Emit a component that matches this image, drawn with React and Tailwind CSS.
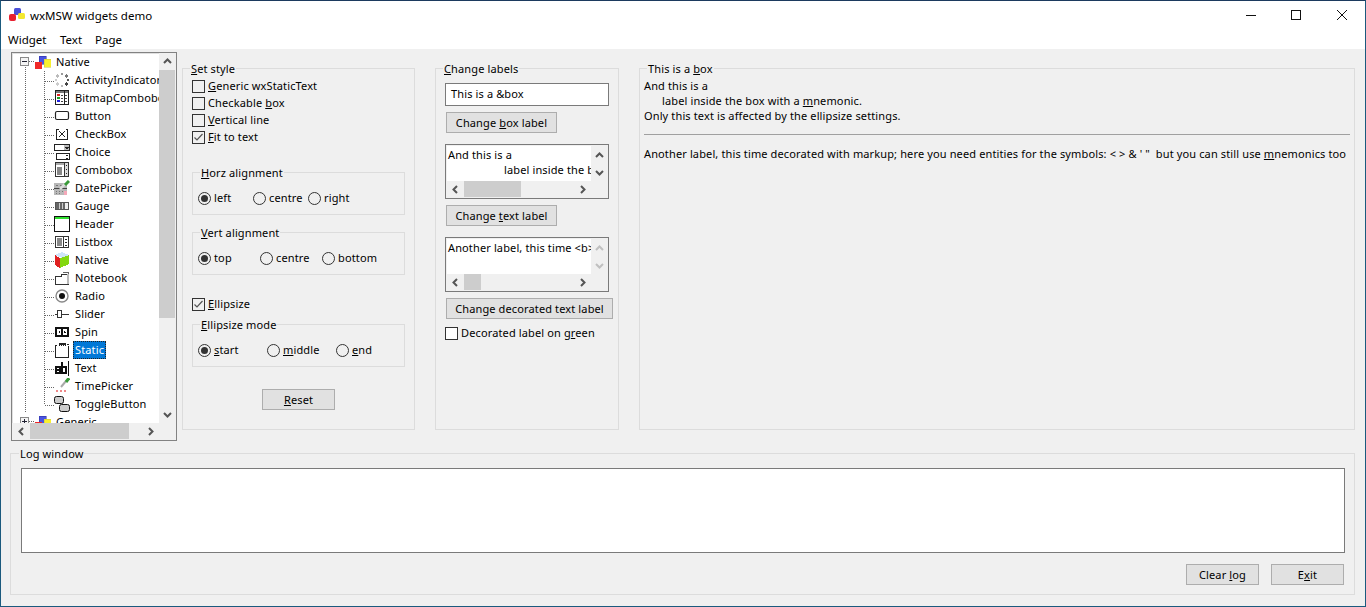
const Group = ({ title, className = "", bodyClassName = "", legendClassName = "ml-[7px]", children }) => (
  <fieldset className={`border border-[#dcdcdc] min-w-0 ${className}`}>
    <legend className={`px-px pt-[2px] leading-[16px] h-[18px] ${legendClassName}`}>{title}</legend>
    <div className={bodyClassName}>{children}</div>
  </fieldset>
);

const Button = ({ className = "", children }) => (
  <div className={`h-[21px] flex items-center justify-center bg-[#e1e1e1] border border-[#adadad] leading-none ${className}`}>
    {children}
  </div>
);

const Checkbox = ({ checked, white, children, className = "" }) => (
  <div className={`flex items-center h-[17px] ${className}`}>
    <div className={`w-[13px] h-[13px] border border-[#333] mr-[3px] shrink-0 ${white ? "bg-white" : "bg-[#f0f0f0]"}`}>
      {checked && (
        <svg width="11" height="11" viewBox="0 0 11 11" fill="none">
          <path d="M1.5 5.5 L4 8 L9.5 2" stroke="#555" strokeWidth="1.2" />
        </svg>
      )}
    </div>
    <span>{children}</span>
  </div>
);

const Radio = ({ checked, children, className = "" }) => (
  <div className={`flex items-center ${className}`}>
    <div className="w-[13px] h-[13px] rounded-full border border-[#333] mr-[3px] shrink-0 flex items-center justify-center">
      {checked && <div className="w-[7px] h-[7px] rounded-full bg-[#333]" />}
    </div>
    <span>{children}</span>
  </div>
);

const Chevron = ({ dir, disabled }) => {
  const paths = {
    up: "M1 6 L4.5 2.5 L8 6",
    down: "M1 3 L4.5 6.5 L8 3",
    left: "M6 1 L2.5 4.5 L6 8",
    right: "M3 1 L6.5 4.5 L3 8",
  };
  return (
    <svg width="9" height="9" viewBox="0 0 9 9" fill="none">
      <path d={paths[dir]} stroke={disabled ? "#c0c0c0" : "#555"} strokeWidth="2" />
    </svg>
  );
};

const ArrowCell = ({ dir }) => (
  <div className="w-[17px] h-[16px] shrink-0 flex items-center justify-center">
    <Chevron dir={dir} />
  </div>
);

const VArrowCell = ({ dir }) => (
  <div className="w-full h-[17px] shrink-0 flex items-center justify-center">
    <Chevron dir={dir} />
  </div>
);

const HScroll = ({ thumb }) => (
  <div className="h-[16px] flex items-center bg-[#f0f0f0] shrink-0">
    <ArrowCell dir="left" />
    <div className="flex-1 h-full">
      <div className="h-full bg-[#cdcdcd]" style={{ width: thumb }} />
    </div>
    <ArrowCell dir="right" />
  </div>
);

const TextBox = ({ thumb, disabled, children }) => (
  <div className="w-[164px] h-[55px] border border-[#7a7a7a] p-px flex flex-col bg-[#f0f0f0]">
    <div className="flex flex-1 min-h-0">
      <div className="flex-1 bg-white overflow-hidden whitespace-nowrap pl-[1px] pt-[1px] leading-[15px]">{children}</div>
      <div className="w-[16px] flex flex-col items-center pt-px">
        <div className="h-[17px] flex items-center"><Chevron dir="up" disabled={disabled} /></div>
        <div className="h-[17px] flex items-center"><Chevron dir="down" disabled={disabled} /></div>
      </div>
    </div>
    <div className="w-[144px]">
      <HScroll thumb={thumb} />
    </div>
  </div>
);

/* tree icons */
const Ico = ({ children }) => (
  <svg width="16" height="16" viewBox="0 0 16 16" fill="none" shapeRendering="crispEdges" className="shrink-0">
    {children}
  </svg>
);

const WxIcon = () => (
  <Ico>
    <rect x="4" y="2" width="7" height="8" fill="#4a55e0" stroke="#2a2a9a" strokeWidth="0.5" />
    <rect x="0" y="8" width="7" height="7" fill="#f02828" />
    <rect x="9" y="5" width="7" height="8" fill="#f8f030" stroke="#c8c040" strokeWidth="0.5" />
  </Ico>
);

const icons = {
  ActivityIndicator: (
    <Ico>
      <circle cx="8" cy="2" r="1.6" fill="#999" />
      <circle cx="12.5" cy="4" r="1.6" fill="#777" />
      <circle cx="14" cy="8" r="1.6" fill="#555" />
      <circle cx="12.5" cy="12" r="1.6" fill="#444" />
      <circle cx="8" cy="14" r="1.6" fill="#bbb" />
      <circle cx="3.5" cy="12" r="1.6" fill="#ccc" />
      <circle cx="2" cy="8" r="1.6" fill="#ccc" />
      <circle cx="3.5" cy="4" r="1.6" fill="#bbb" />
    </Ico>
  ),
  BitmapCombobox: (
    <Ico>
      <rect x="1.5" y="0.5" width="13" height="14" stroke="#222" fill="#fff" />
      <rect x="2" y="1" width="12" height="2" fill="#777" />
      <rect x="3" y="4" width="3" height="2" fill="#e02020" />
      <rect x="3" y="7" width="3" height="2" fill="#20a020" />
      <rect x="3" y="10" width="3" height="2" fill="#2020e0" />
      <path d="M7 5h2M7 8h2M7 11h2M11 5h2M11 8h2M11 11h2" stroke="#444" />
      <path d="M10.5 1v13" stroke="#222" />
    </Ico>
  ),
  Button: (
    <Ico>
      <rect x="1.5" y="3.5" width="13" height="8" rx="1.5" stroke="#222" strokeWidth="1.2" fill="#fff" shapeRendering="auto" />
    </Ico>
  ),
  CheckBox: (
    <Ico>
      <path d="M5 3.5h-2.5v10h11v-10h-2" stroke="#222" />
      <path d="M5 5l6 6M11 5l-6 6" stroke="#222" shapeRendering="auto" />
    </Ico>
  ),
  Choice: (
    <Ico>
      <rect x="0.5" y="0.5" width="15" height="6" stroke="#222" fill="#bbb" />
      <rect x="1" y="1" width="9" height="5" fill="#fff" />
      <path d="M11 3h4M12 4h2" stroke="#222" />
      <rect x="2.5" y="9.5" width="13" height="6" stroke="#222" fill="#fff" />
      <path d="M12 11h2M12 14h2" stroke="#222" />
    </Ico>
  ),
  Combobox: (
    <Ico>
      <rect x="1.5" y="0.5" width="13" height="14" stroke="#333" fill="#fff" />
      <rect x="2" y="1" width="8" height="2" fill="#aaa" />
      <rect x="3" y="5" width="5" height="8" fill="#888" />
      <rect x="11" y="1" width="3" height="13" fill="#ddd" />
      <path d="M10.5 1v13" stroke="#333" />
      <path d="M12 3h1M12 7h1M12 11h1" stroke="#222" />
    </Ico>
  ),
  DatePicker: (
    <Ico>
      <rect x="0" y="3" width="13" height="12" fill="#b8b8b8" />
      <path d="M0 8.5h13" stroke="#444" />
      <path d="M2 5h2M6 5h2M2 11h1M5 11h1M8 11h1M2 13h1M5 13h1" stroke="#777" />
      <rect x="10" y="11" width="3" height="4" fill="#f4a8b8" />
      <path d="M6 9L11 4" stroke="#ddd" strokeWidth="2.5" shapeRendering="auto" />
      <path d="M11 5L15 1" stroke="#3a9a3a" strokeWidth="3" shapeRendering="auto" />
    </Ico>
  ),
  Gauge: (
    <Ico>
      <rect x="1.5" y="4.5" width="13" height="7" stroke="#555" fill="#eee" />
      <rect x="2" y="5" width="9" height="6" fill="#666" />
      <path d="M5 5v6M8 5v6" stroke="#ccc" />
    </Ico>
  ),
  Header: (
    <Ico>
      <rect x="0.5" y="0.5" width="15" height="15" stroke="#111" fill="#fff" />
      <rect x="1" y="1" width="14" height="2" fill="#30e030" />
    </Ico>
  ),
  Listbox: (
    <Ico>
      <rect x="1.5" y="2.5" width="13" height="11" stroke="#333" fill="#fff" />
      <rect x="3" y="4" width="5" height="8" fill="#888" />
      <path d="M9.5 3v10" stroke="#333" />
      <path d="M11 5h2M11 8h2M11 11h2" stroke="#222" />
    </Ico>
  ),
  Native: (
    <Ico>
      <path d="M1 3L8 0L15 3L8 6z" fill="#cfe4f8" />
      <path d="M1 3L6 6V16L1 13z" fill="#e02020" />
      <path d="M6 6L15 3V12L6 16z" fill="#84d810" />
    </Ico>
  ),
  Notebook: (
    <Ico>
      <path d="M1.5 6.5h6v-2h7v10h-13z" stroke="#333" fill="#fff" />
      <path d="M8.5 2.5h6v3" stroke="#666" />
      <rect x="13" y="4" width="2" height="10" fill="#bbb" />
    </Ico>
  ),
  Radio: (
    <Ico>
      <circle cx="8" cy="8" r="6" stroke="#888" strokeWidth="1.4" fill="#fff" shapeRendering="auto" />
      <circle cx="8" cy="8" r="3" fill="#111" shapeRendering="auto" />
    </Ico>
  ),
  Slider: (
    <Ico>
      <rect x="3.5" y="4.5" width="4" height="7" stroke="#333" fill="#fff" />
      <path d="M8 8h7" stroke="#333" />
      <path d="M1 8h2" stroke="#333" />
    </Ico>
  ),
  Spin: (
    <Ico>
      <rect x="1" y="3" width="14" height="10" fill="#111" />
      <rect x="3" y="5" width="4" height="6" fill="#fff" />
      <rect x="9" y="5" width="4" height="6" fill="#fff" />
      <path d="M5.5 7v2M4.5 8h1M10.5 7v2M10.5 8h1" stroke="#111" />
    </Ico>
  ),
  Static: (
    <Ico>
      <path d="M1.5 4v11.5h13v-12" stroke="#222" fill="#fff" />
      <path d="M1 3h2M13 2h2" stroke="#222" />
      <rect x="5" y="1" width="7" height="3" fill="#222" />
      <path d="M6 3v1M8 3v1M10 3v1" stroke="#fff" />
    </Ico>
  ),
  Text: (
    <Ico>
      <rect x="1" y="6" width="6" height="8" fill="#111" />
      <rect x="3" y="8" width="2" height="1" fill="#fff" />
      <rect x="3" y="11" width="2" height="1" fill="#fff" />
      <rect x="7" y="2" width="2" height="12" fill="#111" />
      <rect x="9" y="6" width="4" height="8" fill="#111" />
      <rect x="9" y="8" width="2" height="4" fill="#fff" />
      <path d="M14.5 1v15" stroke="#111" />
    </Ico>
  ),
  TimePicker: (
    <Ico>
      <path d="M7 9L12 3" stroke="#aaa" strokeWidth="2" shapeRendering="auto" />
      <path d="M12 4L15 0" stroke="#3a9a3a" strokeWidth="3" shapeRendering="auto" />
      <path d="M2 13h2M6 13h2M10 13h2" stroke="#e88" strokeWidth="2" />
    </Ico>
  ),
  ToggleButton: (
    <Ico>
      <rect x="0.5" y="0.5" width="9" height="7" rx="2" stroke="#111" fill="#ccc" shapeRendering="auto" />
      <rect x="5.5" y="8.5" width="10" height="7" rx="2" stroke="#111" fill="#ccc" shapeRendering="auto" />
    </Ico>
  ),
};

const children = Object.keys(icons);

const RootRow = ({ label, plus }) => (
  <div className="flex items-center h-[18px] shrink-0 whitespace-nowrap">
    <svg width="23" height="18" shapeRendering="crispEdges" className="shrink-0">
      <path d="M13 13.5V18" stroke="#666" strokeDasharray="1 1" />
      <path d="M17 8.5H23" stroke="#666" strokeDasharray="1 1" />
      <rect x="8.5" y="4.5" width="8" height="8" stroke="#8a8a8a" fill="#f4f4f4" />
      <path d="M10 8.5H15" stroke="#223" />
      {plus && <path d="M12.5 6V11" stroke="#223" />}
    </svg>
    <WxIcon />
    <span className="ml-[5px]">{label}</span>
  </div>
);

const ChildRow = ({ label, last, selected }) => (
  <div className="flex items-center h-[18px] shrink-0 whitespace-nowrap">
    <svg width="42" height="18" shapeRendering="crispEdges" className="shrink-0">
      <path d="M13.5 0V18" stroke="#666" strokeDasharray="1 1" />
      <path d={last ? "M32.5 0V10" : "M32.5 0V18"} stroke="#666" strokeDasharray="1 1" />
      <path d="M33 10.5H42" stroke="#666" strokeDasharray="1 1" />
    </svg>
    {icons[label]}
    <span
      className={`ml-[3px] px-[2px] h-[18px] leading-[17px] ${selected ? "bg-[#0078d7] text-white outline-1 outline-dotted outline-offset-[-1px] outline-[#222]" : ""}`}
    >
      {label}
    </span>
  </div>
);

const Tree = () => (
  <div className="w-[166px] h-[389px] shrink-0 border border-[#828282] pr-px ml-px flex flex-col bg-[#f0f0f0]">
    <div className="flex h-[370px] bg-white shadow-[inset_1px_1px_0_#e0e0e0]">
      <div className="flex-1 min-w-0 overflow-hidden flex flex-col">
        <RootRow label="Native" />
        {children.map((c) => (
          <ChildRow key={c} label={c} last={c === "ToggleButton"} selected={c === "Static"} />
        ))}
        <RootRow label="Generic" plus />
      </div>
      <div className="w-[16px] shrink-0 flex flex-col bg-[#f0f0f0]">
        <VArrowCell dir="up" />
        <div className="h-[248px] bg-[#cdcdcd]" />
        <div className="flex-1" />
        <VArrowCell dir="down" />
      </div>
    </div>
    <div className="w-[146px] ml-px">
      <HScroll thumb="99px" />
    </div>
  </div>
);

const StylePanel = () => (
  <Group
    className="w-[233px] h-[371px] ml-[5px] mt-[7px] shrink-0"
    bodyClassName="px-[9px] pt-px"
    title={<><u>S</u>et style</>}
  >
    <Checkbox><u>G</u>eneric wxStaticText</Checkbox>
    <Checkbox>Checkable <u>b</u>ox</Checkbox>
    <Checkbox><u>V</u>ertical line</Checkbox>
    <Checkbox checked><u>F</u>it to text</Checkbox>

    <Group className="h-[52px] mt-[17px]" title={<><u>H</u>orz alignment</>}>
      <div className="flex h-[35px] items-center pl-[5px]">
        <Radio checked className="w-[55px]">left</Radio>
        <Radio className="w-[55px]">centre</Radio>
        <Radio>right</Radio>
      </div>
    </Group>

    <Group className="h-[52px] mt-[8px]" title={<><u>V</u>ert alignment</>}>
      <div className="flex h-[35px] items-center pl-[5px]">
        <Radio checked className="w-[62px]">top</Radio>
        <Radio className="w-[62px]">centre</Radio>
        <Radio>bottom</Radio>
      </div>
    </Group>

    <Checkbox checked className="mt-[21px]"><u>E</u>llipsize</Checkbox>

    <Group className="h-[52px] mt-[2px]" title={<><u>E</u>llipsize mode</>}>
      <div className="flex h-[35px] items-center pl-[5px]">
        <Radio checked className="w-[69px]"><u>s</u>tart</Radio>
        <Radio className="w-[69px]"><u>m</u>iddle</Radio>
        <Radio><u>e</u>nd</Radio>
      </div>
    </Group>

    <div className="flex justify-center mt-[22px]">
      <Button className="w-[73px]"><span><u>R</u>eset</span></Button>
    </div>
  </Group>
);

const LabelsPanel = () => (
  <Group
    className="w-[184px] h-[371px] ml-[20px] mt-[7px] shrink-0"
    bodyClassName="pl-[9px]"
    title={<><u>C</u>hange labels</>}
  >
    <div className="w-[164px] h-[23px] mt-[6px] border border-[#7a7a7a] bg-white flex items-center pl-[5px]">
      This is a &amp;box
    </div>
    <Button className="w-[111px] ml-px mt-[6px]"><span>Change <u>b</u>ox label</span></Button>
    <div className="mt-[11px]">
      <TextBox thumb="57px">
        <div>And this is a</div>
        <div className="pl-[56px]">label inside the box with a mnemonic.</div>
      </TextBox>
    </div>
    <Button className="w-[111px] ml-px mt-[6px]"><span>Change <u>t</u>ext label</span></Button>
    <div className="mt-[11px]">
      <TextBox thumb="17px" disabled>
        <div>Another label, this time &lt;b&gt;decorated&lt;/b&gt;</div>
      </TextBox>
    </div>
    <Button className="w-[167px] ml-px mt-[6px]"><span>Change decorated text label</span></Button>
    <Checkbox white className="mt-[6px]">Decorated label on <span>g<u>r</u>een</span></Checkbox>
  </Group>
);

const BoxPanel = () => (
  <Group
    className="w-[716px] h-[371px] ml-[20px] mt-[7px] shrink-0"
    bodyClassName="px-[4px]"
    title={<>This is a <u>b</u>ox</>}
  >
    <div className="leading-[15px] pt-px">
      <div>And this is a</div>
      <div className="pl-[18px]">label inside the box with a <u>m</u>nemonic.</div>
      <div>Only this text is affected by the ellipsize settings.</div>
    </div>
    <div className="h-px bg-[#a0a0a0] mt-[11px]" />
    <div className="mt-[11px] leading-[15px] whitespace-nowrap">
      Another label, this time decorated with markup; here you need entities for the symbols: &lt; &gt; &amp; ' "&nbsp; but you can still use <u>m</u>nemonics too
    </div>
  </Group>
);

const App = () => (
  <div className="w-[1366px] h-[607px] overflow-hidden bg-[#f0f0f0] border border-[#1b5a7e] border-t-[#1c3a5e] text-black text-[11px] tracking-[0.13px] font-['Noto_Sans',sans-serif] flex flex-col">
    {/* title bar */}
    <div className="bg-white h-[48px] shrink-0 flex flex-col text-[11.5px] tracking-normal">
      <div className="h-[30px] flex items-center">
        <svg width="16" height="14" viewBox="0 0 16 14" className="ml-[8px] mb-[2px] shrink-0">
          <rect x="5" y="0" width="7" height="7" rx="1.5" fill="#4a50d8" />
          <rect x="0" y="6" width="7" height="7" rx="2" fill="#e82030" />
          <rect x="9" y="5" width="7" height="6" rx="1.5" fill="#f4e830" />
        </svg>
        <span className="ml-[5px]">wxMSW widgets demo</span>
        <div className="flex-1" />
        <div className="flex items-center mb-[2px]">
          <svg width="10" height="10" className="mr-[35px]" shapeRendering="crispEdges"><path d="M0 5.5H10" stroke="#111" /></svg>
          <svg width="10" height="10" className="mr-[36px]" shapeRendering="crispEdges"><rect x="0.5" y="0.5" width="9" height="9" stroke="#111" fill="none" /></svg>
          <svg width="10" height="10" className="mr-[18px]"><path d="M0 0L10 10M10 0L0 10" stroke="#111" /></svg>
        </div>
      </div>
      <div className="flex items-center h-[18px] pl-[7px]">
        <span className="w-[52px]">Widget</span>
        <span className="w-[35px]">Text</span>
        <span>Page</span>
      </div>
    </div>

    {/* panels */}
    <div className="flex items-start pt-[3px] pl-[9px] h-[392px] shrink-0">
      <Tree />
      <StylePanel />
      <LabelsPanel />
      <BoxPanel />
    </div>

    {/* log */}
    <Group
      className="w-[1345px] h-[151px] ml-[9px] mt-[3px] shrink-0"
      bodyClassName="pl-[10px] pr-[9px]"
      legendClassName="ml-[8px]"
      title="Log window"
    >
      <div className="h-[85px] mt-[6px] border border-[#7a7a7a] bg-white" />
      <div className="flex justify-end mt-[11px] pr-px gap-[12px]">
        <Button className="w-[73px]"><span>Clear <u>l</u>og</span></Button>
        <Button className="w-[73px]"><span>E<u>x</u>it</span></Button>
      </div>
    </Group>
  </div>
);

export default App;
